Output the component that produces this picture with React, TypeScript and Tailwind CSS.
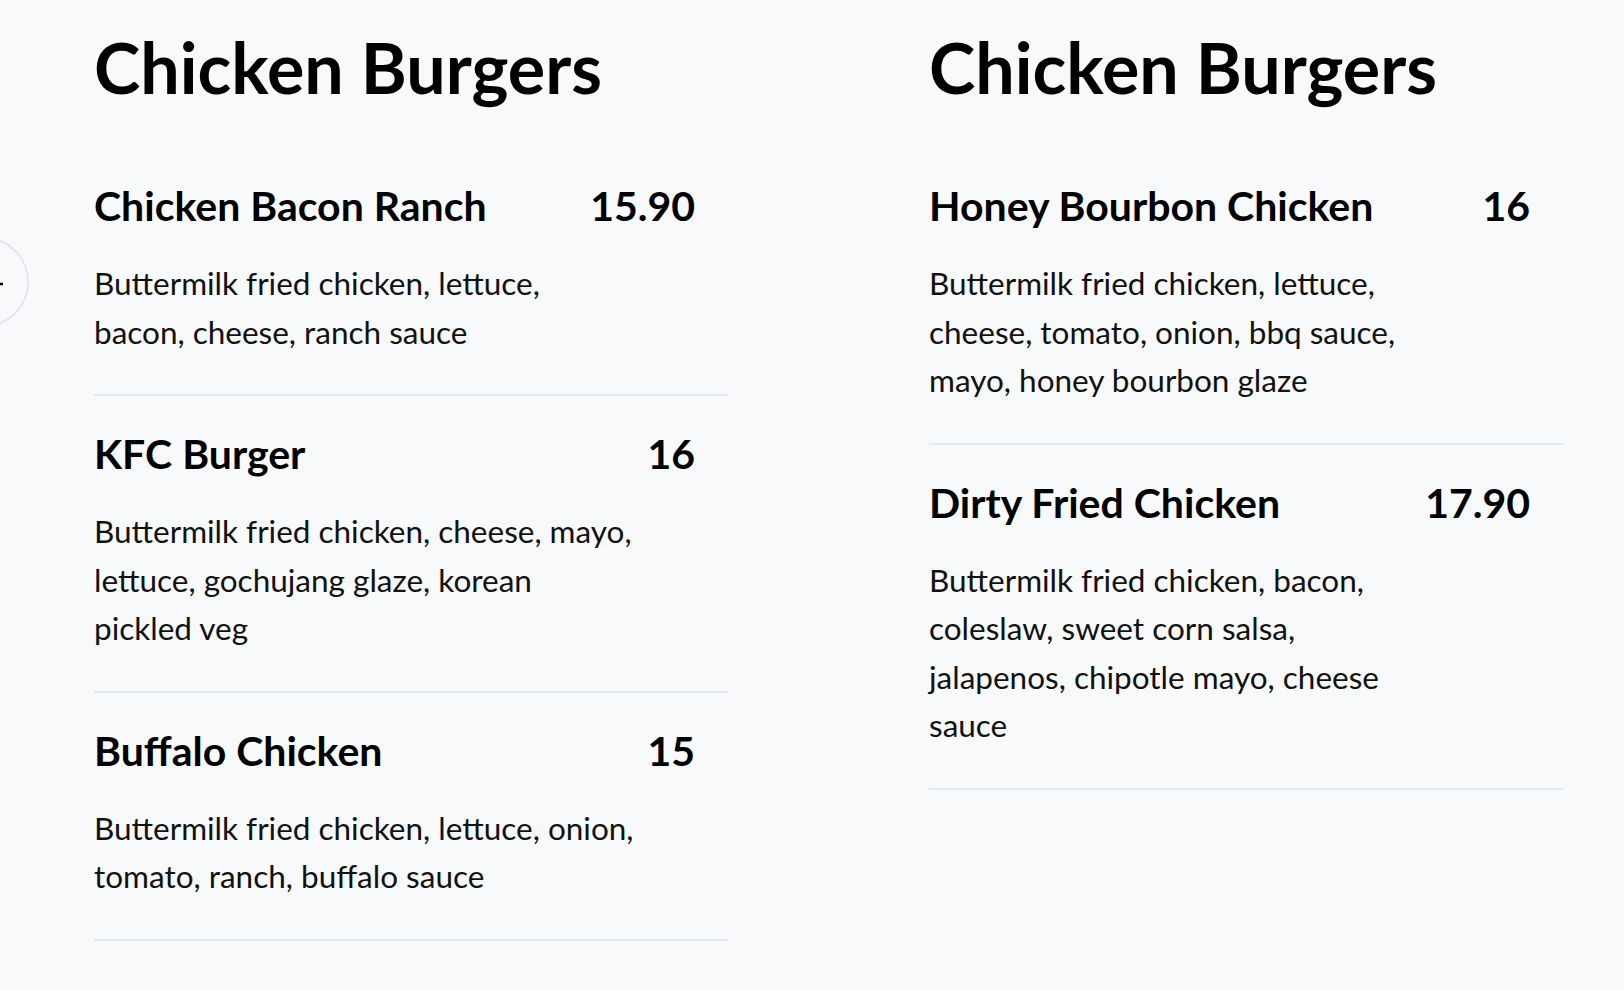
type Item = { name: string; price: string; lines: string[] };

const LEFT: Item[] = [
  {
    name: "Chicken Bacon Ranch",
    price: "15.90",
    lines: ["Buttermilk fried chicken, lettuce,", "bacon, cheese, ranch sauce"],
  },
  {
    name: "KFC Burger",
    price: "16",
    lines: ["Buttermilk fried chicken, cheese, mayo,", "lettuce, gochujang glaze, korean", "pickled veg"],
  },
  {
    name: "Buffalo Chicken",
    price: "15",
    lines: ["Buttermilk fried chicken, lettuce, onion,", "tomato, ranch, buffalo sauce"],
  },
];

const RIGHT: Item[] = [
  {
    name: "Honey Bourbon Chicken",
    price: "16",
    lines: ["Buttermilk fried chicken, lettuce,", "cheese, tomato, onion, bbq sauce,", "mayo, honey bourbon glaze"],
  },
  {
    name: "Dirty Fried Chicken",
    price: "17.90",
    lines: ["Buttermilk fried chicken, bacon,", "coleslaw, sweet corn salsa,", "jalapenos, chipotle mayo, cheese", "sauce"],
  },
];

function MenuItem({ item }: { item: Item }) {
  return (
    <div className="border-b-2 border-[#e4e9f0] pt-[34px] pb-[38px]">
      <div className="flex items-baseline justify-between pr-[33px]">
        <h3 className="text-[41px] leading-[48px] font-bold text-black">{item.name}</h3>
        <span className="text-[41px] leading-[48px] font-bold text-black">{item.price}</span>
      </div>
      {/* lines kept as in the menu card, one per row */}
      <p className="mt-[29px] text-[31.5px] leading-[48.5px] text-[#111]">
        {item.lines.map((line, i) => (
          <span key={i} className="block whitespace-nowrap">
            {line}
          </span>
        ))}
      </p>
    </div>
  );
}

function Column({ items }: { items: Item[] }) {
  return (
    <section className="w-[634px] shrink-0">
      <h2 className="mb-[46px] text-[70px] leading-none font-bold text-black">Chicken Burgers</h2>
      {items.map((item) => (
        <MenuItem key={item.name} item={item} />
      ))}
    </section>
  );
}

export default function App() {
  return (
    <div className="relative min-h-screen overflow-hidden bg-[#f8f9fb] font-['Lato',sans-serif]">
      {/* carousel prev button, mostly off-screen */}
      <div className="absolute left-[-61px] top-[237px] h-[90px] w-[90px] rounded-full border-2 border-[#e3e6ec]">
        <svg className="absolute left-[23px] top-[35px]" width="40" height="20" viewBox="0 0 40 20" fill="none">
          <path d="M39 10H14M21 3l-7 7 7 7" stroke="#000" strokeWidth="2.5" />
        </svg>
      </div>

      <div className="flex gap-[201px] pl-[94px] pt-[32px]">
        <Column items={LEFT} />
        <Column items={RIGHT} />
      </div>
    </div>
  );
}
